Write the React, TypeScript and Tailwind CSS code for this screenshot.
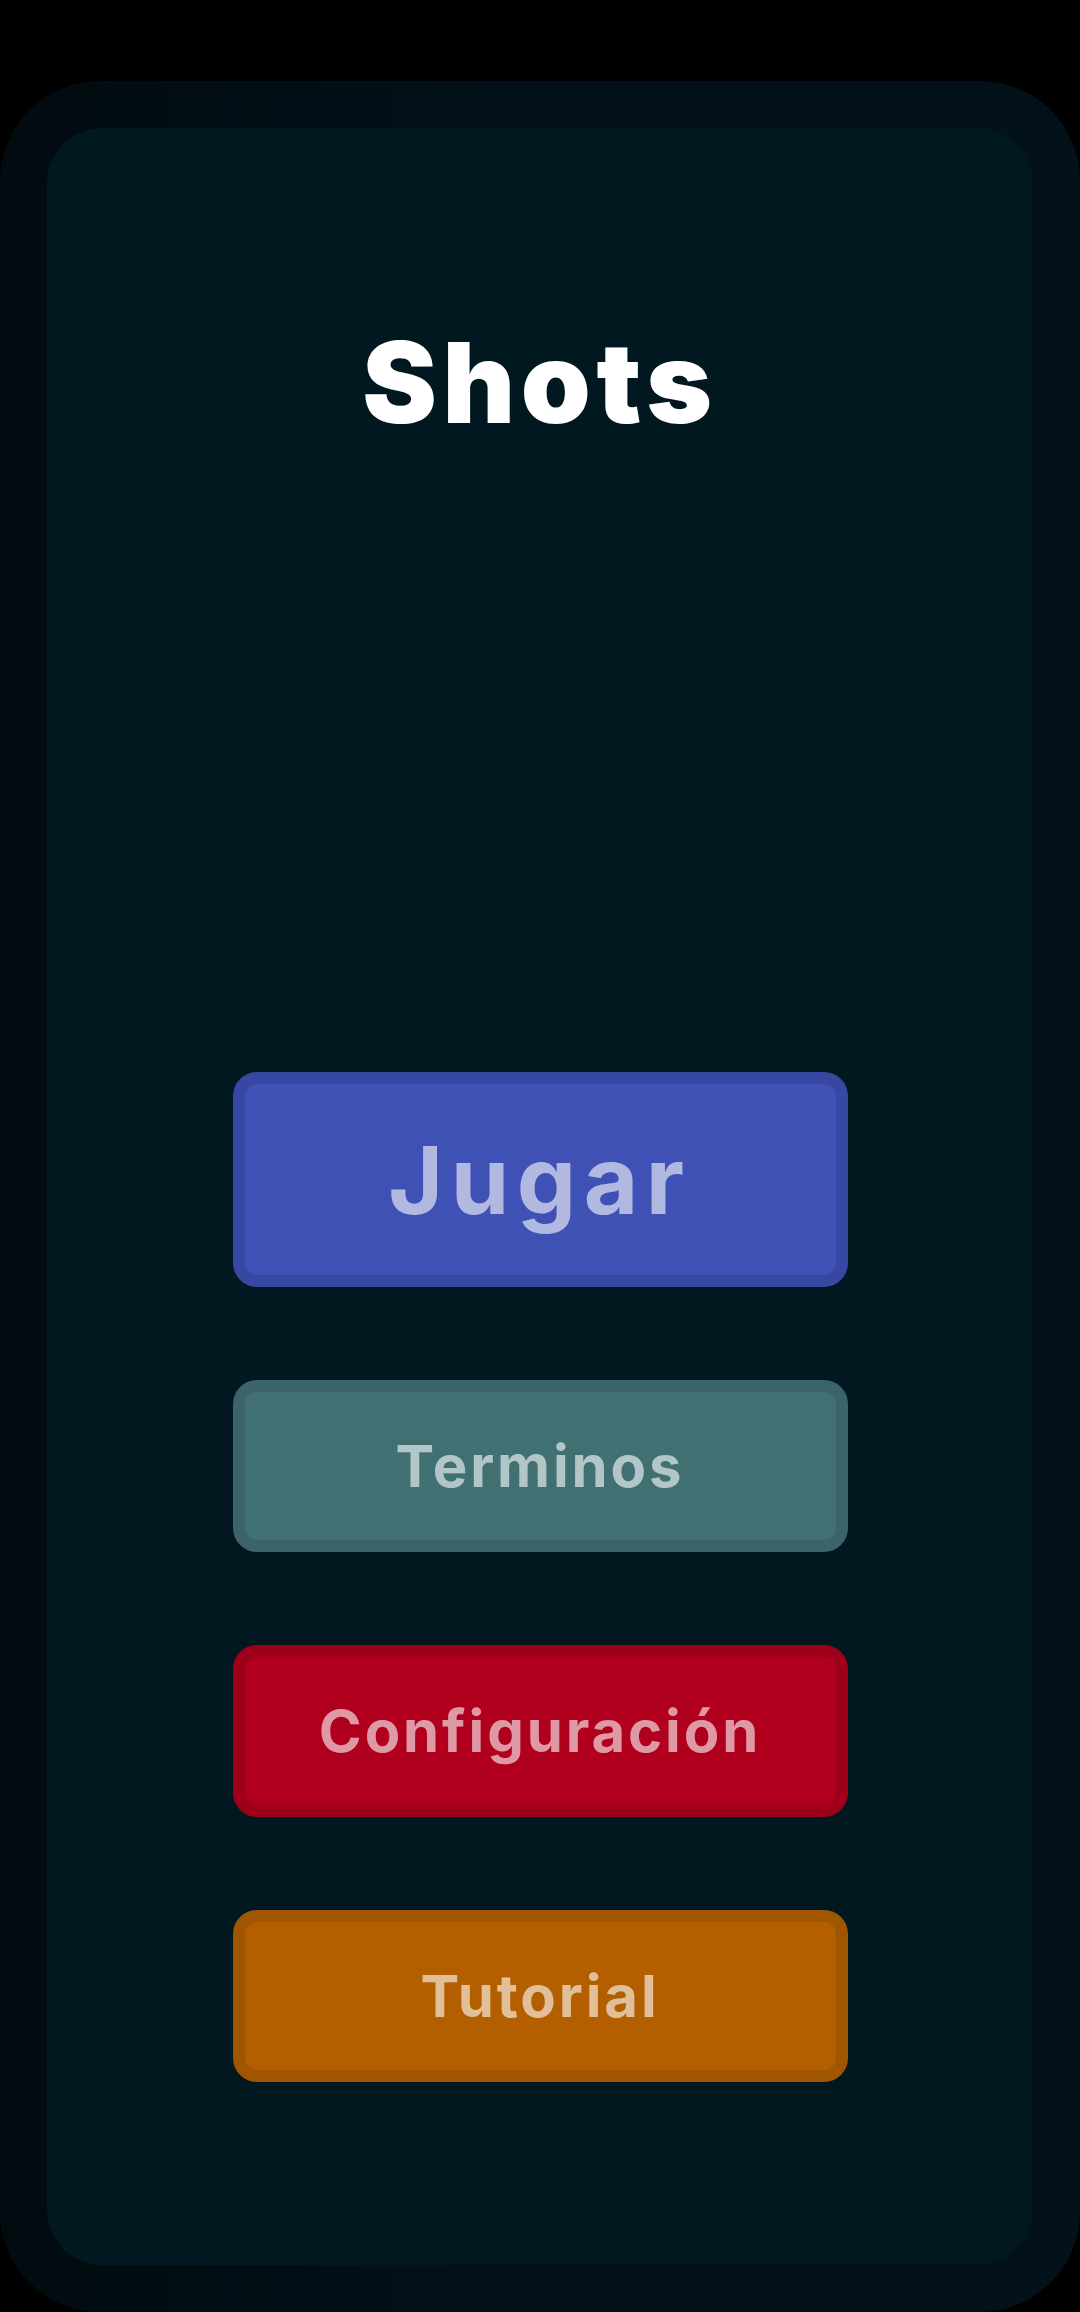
import React from 'react';

const menuItems = [
  { id: 'jugar', label: 'Jugar', big: true, color: 'bg-[#3f51b5]' },
  { id: 'terminos', label: 'Terminos', big: false, color: 'bg-[#417073]' },
  { id: 'config', label: 'Configuración', big: false, color: 'bg-[#b0001e]' },
  { id: 'tutorial', label: 'Tutorial', big: false, color: 'bg-[#b35f00]' },
];

const MenuButton: React.FC<{ label: string; big: boolean; color: string }> = ({ label, big, color }) => (
  <button
    className={`w-[615px] flex items-center justify-center rounded-[24px] border-[12px] border-black/10 ${color} ${
      big ? 'h-[215px]' : 'h-[172px]'
    }`}
  >
    <span
      className={`font-bold leading-none text-white/60 ${
        big ? 'text-[94px] tracking-[0.08em]' : 'text-[58px] tracking-[0.05em]'
      }`}
    >
      {label}
    </span>
  </button>
);

export default function App() {
  return (
    <div
      className="min-h-[2312px] w-[1080px] bg-black pt-[81px]"
      style={{ fontFamily: 'Inter, "Noto Sans", sans-serif' }}
    >
      <div className="h-[2231px] rounded-[100px] bg-gradient-to-r from-[#010b10] via-[#03111a] to-[#03111a] p-[47px]">
        <div className="h-[2137px] rounded-[55px] bg-[#011820] flex flex-col items-center">
          <h1 className="mt-[198px] text-[112px] leading-none font-black tracking-[0.05em] text-white">Shots</h1>

          <div className="mt-[634px] flex flex-col items-center gap-[93px]">
            {menuItems.map((item) => (
              <MenuButton key={item.id} label={item.label} big={item.big} color={item.color} />
            ))}
          </div>
        </div>
      </div>
    </div>
  );
}
